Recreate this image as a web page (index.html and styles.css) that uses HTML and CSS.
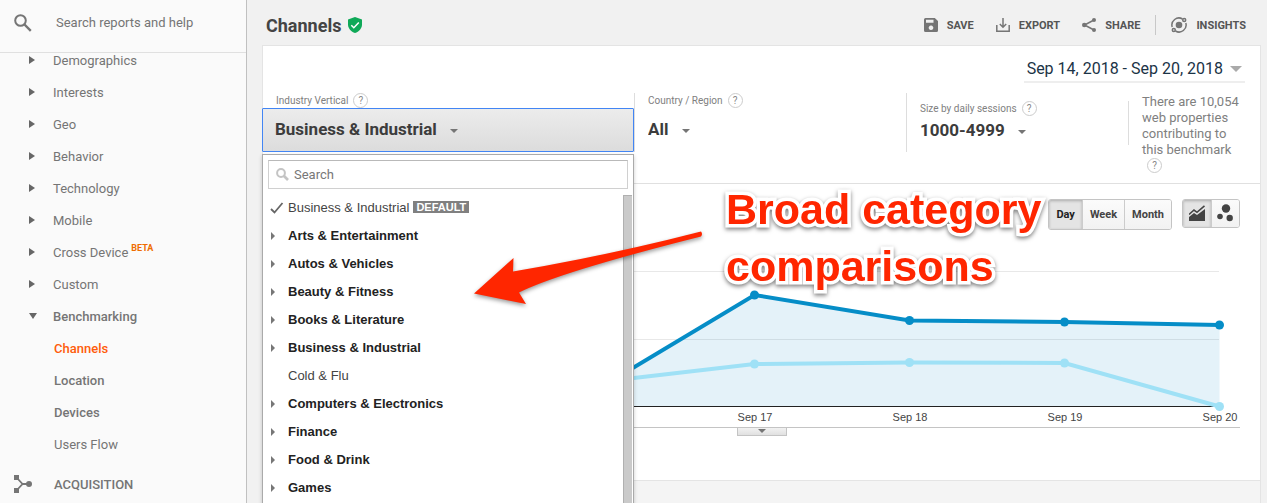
FILE: index.html
```html
<!DOCTYPE html>
<html lang="en">
<head>
    <meta charset="UTF-8">
    <meta name="viewport" content="width=device-width, initial-scale=1.0">
    <title>Channels</title>
    <link rel="stylesheet" href="styles.css">
</head>
<body>
    <div class="app">
        <aside class="sidebar">
            <div class="sidebar-search">
                <svg class="search-icon" viewBox="0 0 18 18" width="18" height="18"><circle cx="6.5" cy="6.5" r="5.3" fill="none" stroke="#757575" stroke-width="2"/><path d="M10.5 10.5l6.3 6.3" stroke="#757575" stroke-width="2.4"/></svg>
                <input type="text" placeholder="Search reports and help" aria-label="Search reports and help">
            </div>
            <nav class="nav">
                <a href="#"><span class="arrow"></span>Demographics</a>
                <a href="#"><span class="arrow"></span>Interests</a>
                <a href="#"><span class="arrow"></span>Geo</a>
                <a href="#"><span class="arrow"></span>Behavior</a>
                <a href="#"><span class="arrow"></span>Technology</a>
                <a href="#"><span class="arrow"></span>Mobile</a>
                <a href="#"><span class="arrow"></span>Cross Device <span class="beta">BETA</span></a>
                <a href="#"><span class="arrow"></span>Custom</a>
                <a href="#" class="strong"><span class="arrow down"></span>Benchmarking</a>
                <a href="#" class="sub strong active">Channels</a>
                <a href="#" class="sub strong">Location</a>
                <a href="#" class="sub strong">Devices</a>
                <a href="#" class="sub">Users Flow</a>
                <a href="#" class="section">
                    <svg viewBox="0 0 18 18" width="18" height="18"><path d="M0 0h5v5H0zM0 13h5v5H0z" fill="#757575"/><path d="M3 3l5.5 6L3 15M8 9h6" fill="none" stroke="#757575" stroke-width="1.8"/><circle cx="15" cy="9" r="3" fill="#757575"/></svg>
                    ACQUISITION
                </a>
            </nav>
        </aside>

        <main class="main">
            <header class="header">
                <h1>Channels</h1>
                <svg class="shield" viewBox="0 0 14 16" width="14" height="16"><path d="M7 0l7 2.6v5C14 11.5 11 15 7 16 3 15 0 11.5 0 7.6v-5z" fill="#0fa958"/><path d="M3.3 8.2l2.5 2.5 5-5.2" fill="none" stroke="#fff" stroke-width="1.5"/></svg>
                <div class="actions">
                    <button type="button">
                        <svg viewBox="0 0 14 14" width="14" height="14"><path fill="#757575" fill-rule="evenodd" d="M1.5 0h9.3L14 3v9.5a1.5 1.5 0 0 1-1.5 1.5h-11A1.5 1.5 0 0 1 0 12.5v-11A1.5 1.5 0 0 1 1.5 0zM2 1.7v3h7.5v-3zM7 7.5a2.3 2.3 0 1 0 .01 0z"/></svg>
                        SAVE
                    </button>
                    <button type="button">
                        <svg viewBox="0 0 14 14" width="14" height="14"><path d="M.8 7v6.2h12.4V7M7 0v9M3.8 6L7 9.2 10.2 6" fill="none" stroke="#757575" stroke-width="1.5"/></svg>
                        EXPORT
                    </button>
                    <button type="button">
                        <svg viewBox="0 0 14 14" width="14" height="14"><path d="M12 2L2.5 7l9.5 5" fill="none" stroke="#757575" stroke-width="1.5"/><g fill="#757575"><circle cx="12" cy="2" r="2"/><circle cx="2.3" cy="7" r="2.3"/><circle cx="12" cy="12" r="2"/></g></svg>
                        SHARE
                    </button>
                    <span class="divider"></span>
                    <button type="button">
                        <svg viewBox="0 0 16 16" width="16" height="16"><g fill="none" stroke="#757575" stroke-width="1.5"><path d="M1.2 10A7 7 0 0 1 11.5 2M14.8 6A7 7 0 0 1 4.5 14"/><circle cx="13.2" cy="3" r="1.5"/><circle cx="2.8" cy="13" r="1.5"/></g><circle cx="8" cy="8" r="3.3" fill="#757575"/></svg>
                        INSIGHTS
                    </button>
                </div>
            </header>

            <section class="card">
                <div class="date-row">
                    <button type="button" class="date-range">Sep 14, 2018 - Sep 20, 2018<span class="date-caret"></span></button>
                </div>

                <div class="filters">
                    <div class="filter filter-industry">
                        <div class="filter-label"><label for="industry">Industry Vertical</label><span class="help">?</span></div>
                        <div class="filter-value open">
                            <select id="industry"><option>Business &amp; Industrial</option></select>
                            <span class="caret"></span>
                        </div>
                        <div class="menu">
                            <div class="menu-search">
                                <svg viewBox="0 0 13 13" width="13" height="13"><circle cx="5" cy="5" r="3.9" fill="none" stroke="#c4c4c4" stroke-width="2"/><path d="M8 8l4 4" stroke="#c4c4c4" stroke-width="2.6"/></svg>
                                <input type="text" placeholder="Search" aria-label="Search industries">
                            </div>
                            <div class="menu-body">
                                <ul class="options">
                                    <li class="plain"><svg class="tick" viewBox="0 0 14 12" width="14" height="12"><path d="M1 7l3.5 3.5L12.5 1" fill="none" stroke="#666" stroke-width="1.8"/></svg>Business &amp; Industrial<span class="badge">DEFAULT</span></li>
                                    <li>Arts &amp; Entertainment</li>
                                    <li>Autos &amp; Vehicles</li>
                                    <li>Beauty &amp; Fitness</li>
                                    <li>Books &amp; Literature</li>
                                    <li>Business &amp; Industrial</li>
                                    <li class="plain">Cold &amp; Flu</li>
                                    <li>Computers &amp; Electronics</li>
                                    <li>Finance</li>
                                    <li>Food &amp; Drink</li>
                                    <li>Games</li>
                                </ul>
                                <div class="scrollbar"></div>
                            </div>
                        </div>
                    </div>

                    <div class="filter filter-country">
                        <div class="filter-label"><label for="country">Country / Region</label><span class="help">?</span></div>
                        <div class="filter-value">
                            <select id="country"><option>All</option></select>
                            <span class="caret"></span>
                        </div>
                    </div>

                    <div class="filter filter-size">
                        <div class="filter-label"><label for="size">Size by daily sessions</label><span class="help">?</span></div>
                        <div class="filter-value">
                            <select id="size"><option>1000-4999</option></select>
                            <span class="caret"></span>
                        </div>
                    </div>

                    <div class="note">
                        <p>There are 10,054 web properties contributing to this benchmark</p>
                        <span class="help">?</span>
                    </div>
                </div>

                <div class="report">
                    <div class="toolbar">
                        <div class="btn-group">
                            <button type="button" class="pressed">Day</button>
                            <button type="button">Week</button>
                            <button type="button">Month</button>
                        </div>
                        <div class="btn-group icons">
                            <button type="button" class="pressed" aria-label="Line chart"><svg viewBox="0 0 16 16" width="16" height="16"><path d="M0 16v-4l5-4 3 2 8-6v12z" fill="#444"/><path d="M0 9.5L5 5l3 2.3L15.5.8" fill="none" stroke="#444" stroke-width="1.6"/></svg></button>
                            <button type="button" aria-label="Motion chart"><svg viewBox="0 0 16 18" width="16" height="18"><g fill="#444"><circle cx="9" cy="4.5" r="4.2"/><circle cx="3" cy="12.5" r="2.8"/><circle cx="12.7" cy="14" r="3.2"/></g></svg></button>
                        </div>
                    </div>

                    <svg class="chart" viewBox="0 0 956 197">
                        <path class="grid" d="M5 41.5H935M5 109.5H935"/>
                        <path class="area" d="M5.5 176V140L160.5 150 315.5 158 470.5 65 625.5 90.5 780.5 92 935.5 95V176z"/>
                        <path class="axis" d="M5 176.5H935"/>
                        <g class="series light">
                            <path d="M5.5 150L160.5 155 315.5 152 470.5 134 625.5 132.5 780.5 133 935.5 176.5"/>
                            <circle cx="470.5" cy="134" r="4.5"/>
                            <circle cx="625.5" cy="132.5" r="4.5"/>
                            <circle cx="780.5" cy="133" r="4.5"/>
                            <circle cx="935.5" cy="176.5" r="4.5"/>
                        </g>
                        <g class="series dark">
                            <path d="M5.5 140L160.5 150 315.5 158 470.5 65 625.5 90.5 780.5 92 935.5 95"/>
                            <circle cx="470.5" cy="65" r="4.5"/>
                            <circle cx="625.5" cy="90.5" r="4.5"/>
                            <circle cx="780.5" cy="92" r="4.5"/>
                            <circle cx="935.5" cy="95" r="4.5"/>
                        </g>
                        <g class="ticks">
                            <text x="471" y="191">Sep 17</text>
                            <text x="626" y="191">Sep 18</text>
                            <text x="781" y="191">Sep 19</text>
                            <text x="936" y="191">Sep 20</text>
                        </g>
                    </svg>
                    <div class="chart-footer">
                        <button type="button" class="expander" aria-label="Expand"><span class="caret"></span></button>
                    </div>
                </div>
            </section>
            <div class="card-below"></div>
        </main>

        <!-- callout drawn over the report -->
        <svg class="callout-arrow" viewBox="0 0 236 84" width="236" height="84"><path d="M4 63.5L43.5 28 43 41.5Q140 25 231 1.5 233 4 231 6.5 90 42 49 62.5L56 74z" fill="#ff2600"/></svg>
        <p class="callout">Broad category<br>comparisons</p>
    </div>
</body>
</html>
```
FILE: styles.css
```css
* {
    box-sizing: border-box;
}

body {
    margin: 0;
    font-family: Roboto, Arial, sans-serif;
    font-size: 13px;
    color: #444;
    background-color: #f1f1f1;
}

button,
input,
select {
    font-family: inherit;
    color: inherit;
    border: none;
    background: none;
    padding: 0;
    margin: 0;
}

button,
select {
    cursor: pointer;
}

.app {
    position: relative;
    display: flex;
    height: 100vh;
    overflow: hidden;
}

/* Sidebar */
.sidebar {
    flex: 0 0 247px;
    background-color: #fafafa;
    border-right: 1px solid #c0c0c0;
}

.sidebar-search {
    display: flex;
    align-items: center;
    height: 53px;
    padding: 0 14px 6px;
    gap: 24px;
    border-bottom: 1px solid #e0e0e0;
}

.sidebar-search input {
    flex: 1;
    min-width: 0;
    height: 20px;
    padding-bottom: 2px;
    font-size: 13px;
    outline: none;
}

.sidebar-search input::placeholder {
    color: #757575;
    opacity: 1;
}

.nav {
    margin-top: -9px;
}

.nav a {
    display: flex;
    align-items: center;
    height: 32px;
    padding-left: 29px;
    color: #757575;
    text-decoration: none;
}

.nav .strong,
.nav .section {
    font-weight: 500;
}

.nav .sub {
    padding-left: 54px;
}

.nav .active {
    color: #ff5c0a;
}

.nav .section {
    height: 48px;
    padding-left: 14px;
    gap: 22px;
}

.arrow {
    width: 6px;
    margin-right: 18px;
    border-left: 6px solid #666;
    border-top: 4px solid transparent;
    border-bottom: 4px solid transparent;
}

.arrow.down {
    width: 8px;
    margin-right: 16px;
    border-top: 6px solid #666;
    border-left: 4px solid transparent;
    border-right: 4px solid transparent;
    border-bottom: none;
}

.beta {
    margin-left: 3px;
    padding-bottom: 8px;
    font-size: 9px;
    font-weight: 700;
    color: #ef6c00;
}

/* Header */
.main {
    flex: 1;
    min-width: 0;
    padding: 0 6px 0 15px;
}

.header {
    display: flex;
    align-items: center;
    height: 45px;
    padding: 5px 15px 0 4px;
}

h1 {
    margin: 0 7px 0 0;
    font-size: 18px;
    font-weight: 700;
}

.actions {
    display: flex;
    align-items: center;
    gap: 22px;
    margin-left: auto;
}

.actions button {
    display: flex;
    align-items: center;
    gap: 9px;
    font-size: 11px;
    font-weight: 700;
    color: #555;
}

.divider {
    width: 1px;
    height: 20px;
    margin: 0 -7px;
    background-color: #c8c8c8;
}

/* Report card */
.card {
    height: 436px;
    background-color: #fff;
    border: 1px solid #e4e4e4;
}

.card-below {
    height: 100%;
    background-color: #f4f4f4;
    border: 1px solid #e4e4e4;
    border-top: none;
}

.date-row {
    display: flex;
    justify-content: flex-end;
    height: 47px;
    padding: 10px 15px;
}

.date-range {
    display: flex;
    align-items: center;
    height: 27px;
    padding: 0 3px;
    gap: 7px;
    font-size: 16px;
    color: #1b3346;
    border-bottom: 2px solid #eee;
}

.date-caret {
    border-top: 6px solid #aaa;
    border-left: 6px solid transparent;
    border-right: 6px solid transparent;
}

.filters {
    display: flex;
    align-items: flex-start;
    height: 91px;
    border-bottom: 1px solid #e0e0e0;
}

.filter {
    height: 59px;
}

.filter-industry {
    position: relative;
    flex: 0 0 371px;
}

.filter-country {
    flex: 1;
    padding-left: 13px;
    border-left: 1px solid #ddd;
}

.filter-size {
    flex: 0 0 222px;
    padding: 8px 0 0 13px;
    border-left: 1px solid #ddd;
}

.filter-label {
    display: flex;
    align-items: center;
    gap: 5px;
    height: 15px;
    font-size: 10px;
    color: #808080;
}

.filter-industry .filter-label {
    padding-left: 13px;
}

.help {
    display: flex;
    flex: none;
    align-items: center;
    justify-content: center;
    width: 15px;
    height: 15px;
    font-size: 10px;
    color: #888;
    border: 1px solid #ccc;
    border-radius: 50%;
}

.filter-value {
    display: flex;
    align-items: center;
    gap: 13px;
    height: 42px;
}

.filter-size .filter-value {
    height: 28px;
}

.filter-value select {
    appearance: none;
    font-size: 17px;
    font-weight: 700;
    color: #3c3c3c;
}

.filter-value.open {
    height: 44px;
    margin-left: -1px;
    padding: 0 0 2px 12px;
    background: linear-gradient(#ececec, #dcdcdc);
    border: 1px solid #4285f4;
    border-radius: 1px;
}

.caret {
    margin-top: 4px;
    border-top: 4px solid #757575;
    border-left: 4px solid transparent;
    border-right: 4px solid transparent;
}

.note {
    position: relative;
    flex: 0 0 132px;
    padding-left: 14px;
    color: #808080;
    line-height: 16px;
}

.note::before {
    content: "";
    position: absolute;
    top: 8px;
    left: 0;
    width: 1px;
    height: 44px;
    background-color: #ddd;
}

.note p {
    margin: 1px 18px 0 0;
}

.note .help {
    margin-left: 5px;
}

/* Industry drop-down menu */
.menu {
    position: absolute;
    z-index: 1;
    top: 61px;
    left: -1px;
    right: 0;
    padding: 5px 1px 20px 5px;
    background-color: #fff;
    border: 1px solid #aaa;
    box-shadow: 0 2px 4px rgba(0, 0, 0, 0.2);
}

.menu-search {
    display: flex;
    align-items: center;
    gap: 5px;
    height: 29px;
    margin-right: 4px;
    padding-left: 7px;
    border: 1px solid #d0d0d0;
    border-top-color: #b9b9b9;
}

.menu-search input {
    flex: 1;
    font-size: 13px;
    outline: none;
}

.menu-search input::placeholder {
    color: #777;
    opacity: 1;
}

.menu-body {
    display: flex;
    margin-top: 4px;
}

.options {
    flex: 1;
    margin: 0;
    padding: 0;
    list-style: none;
    font-family: "Liberation Sans", Arial, sans-serif;
}

.options li {
    display: flex;
    align-items: center;
    height: 28px;
    padding-left: 3px;
    font-weight: bold;
    color: #222;
}

.options li::before {
    content: "";
    margin: 2px 13px 0 0;
    border-left: 4px solid #777;
    border-top: 4px solid transparent;
    border-bottom: 4px solid transparent;
}

.options .plain {
    padding-left: 20px;
    font-weight: normal;
    color: #444;
}

.options .plain::before {
    display: none;
}

.tick {
    margin: 2px 4px 0 -18px;
}

.badge {
    margin-left: 4px;
    padding: 0 3px;
    font-size: 11px;
    line-height: 12px;
    font-weight: bold;
    color: #fff;
    background-color: #808080;
}

.scrollbar {
    width: 9px;
    margin: 2px 0 -20px;
    background-color: #cacaca;
    border: 1px solid #b0b0b0;
    border-width: 1px 0 0 1px;
}

/* Chart */
.report {
    padding: 15px 20px 0 21px;
}

.toolbar {
    display: flex;
    align-items: flex-start;
    justify-content: flex-end;
    gap: 10px;
    height: 31px;
}

.btn-group {
    display: flex;
    height: 31px;
    border: 1px solid #c4c4c4;
    border-radius: 3px;
    overflow: hidden;
}

.btn-group button {
    display: flex;
    align-items: center;
    justify-content: center;
    padding: 0 7px;
    font-size: 11px;
    font-weight: 700;
    background: linear-gradient(#fbfbfb, #f2f2f2);
}

.btn-group button + button {
    border-left: 1px solid #ccc;
}

.btn-group .pressed {
    color: #222;
    background: #e4e4e4;
    box-shadow: inset 0 1px 3px rgba(0, 0, 0, 0.25);
}

.icons {
    height: 29px;
}

.icons button {
    width: 28px;
    padding: 0 1px 1px 0;
}

.chart {
    display: block;
    width: 100%;
}

.grid {
    stroke: #e8e8e8;
}

.axis {
    stroke: #222;
}

.area {
    fill: #058dc7;
    fill-opacity: 0.11;
}

.series path {
    fill: none;
    stroke-width: 4;
}

.dark path {
    stroke: #058dc7;
}

.dark circle {
    fill: #058dc7;
}

.light path {
    stroke: #9fe1f6;
}

.light circle {
    fill: #9fe1f6;
}

.ticks {
    font-family: "Liberation Sans", Arial, sans-serif;
    font-size: 11px;
    fill: #444;
    text-anchor: middle;
}

.chart-footer {
    border-top: 1px solid #c4c4c4;
}

.expander {
    display: flex;
    justify-content: center;
    width: 50px;
    height: 8px;
    margin: 0 auto;
    background: linear-gradient(#f2f2f2, #e0e0e0);
    border: 1px solid #c4c4c4;
    border-top: none;
}

.expander .caret {
    margin-top: 1px;
}

/* Callout */
.callout,
.callout-arrow {
    position: absolute;
    z-index: 2;
}

.callout {
    top: 181px;
    left: 726px;
    margin: 0;
    font-family: "Liberation Sans", Arial, sans-serif;
    font-size: 43px;
    font-weight: bold;
    line-height: 57px;
    white-space: nowrap;
    color: #ff2600;
    -webkit-text-stroke: 7px #fff;
    paint-order: stroke fill;
    filter: drop-shadow(0 2px 2px rgba(0, 0, 0, 0.5));
}

.callout-arrow {
    top: 230px;
    left: 470px;
    filter: drop-shadow(0 2px 2px rgba(0, 0, 0, 0.4));
}
```
